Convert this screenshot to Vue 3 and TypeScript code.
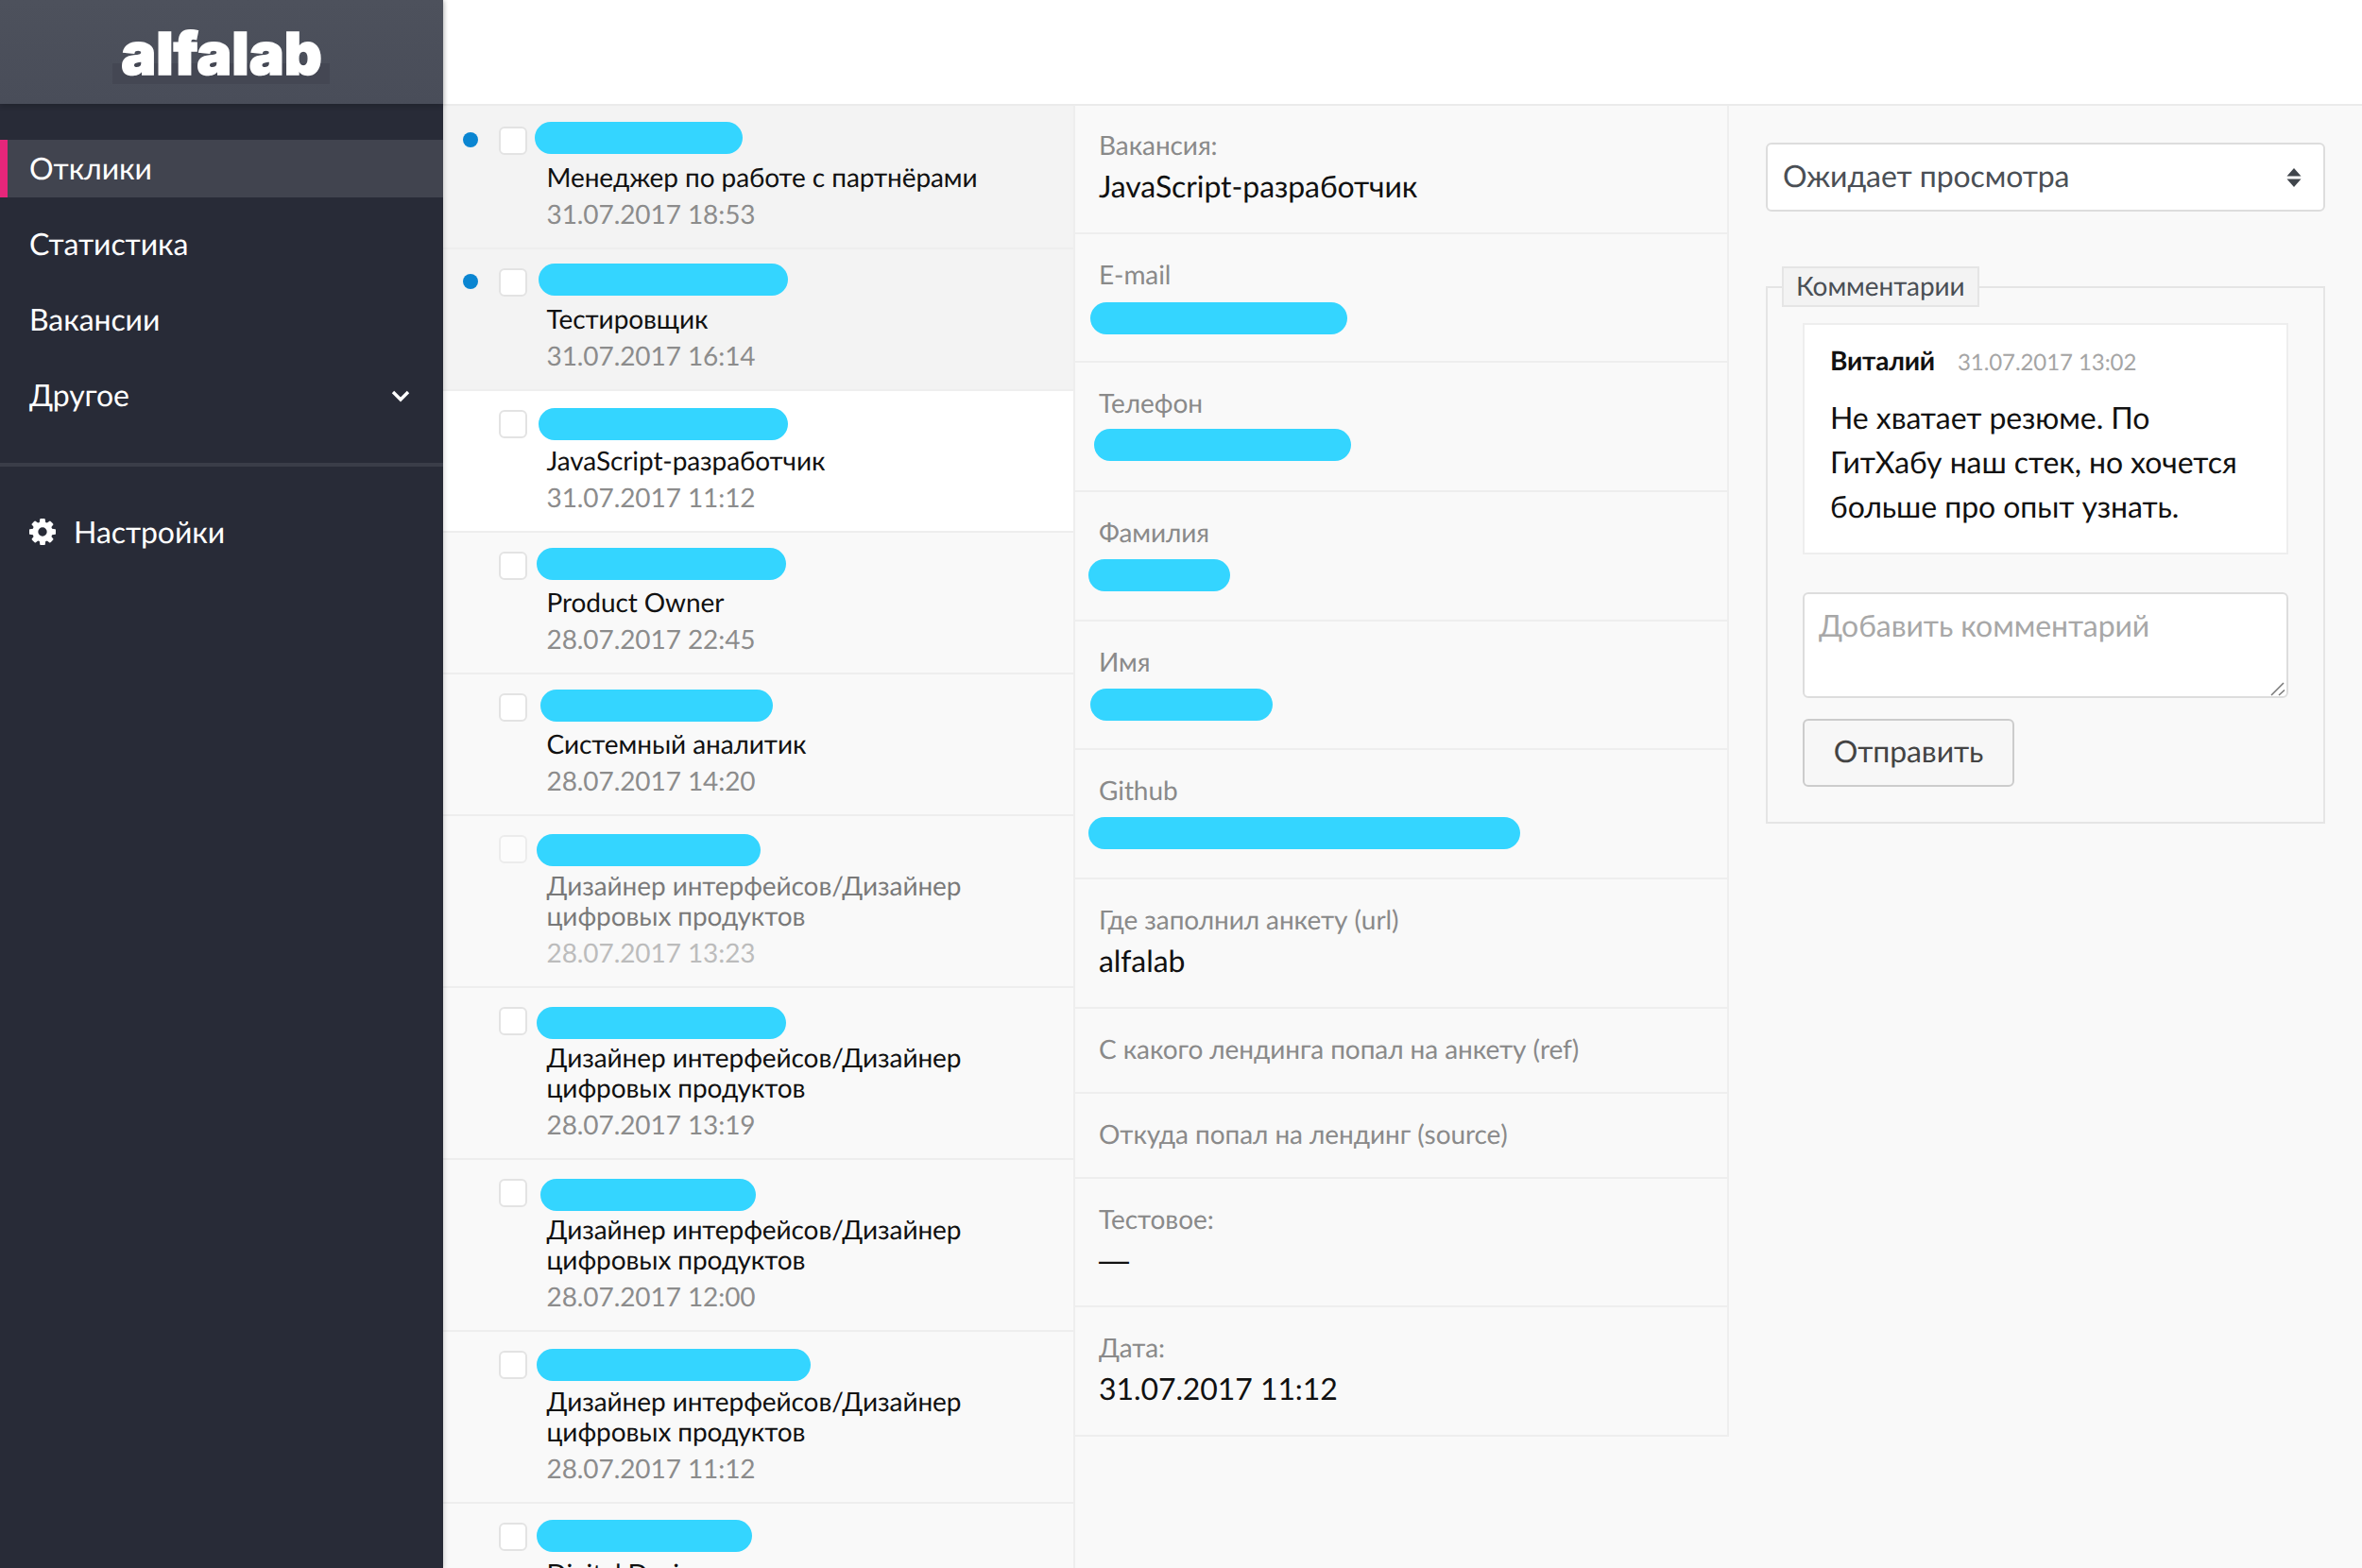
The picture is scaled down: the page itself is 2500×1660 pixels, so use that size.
<script setup lang="ts">
interface Response {
  name: string;
  date: string;
  pillX: number;
  pillW: number;
  pillTop: number;
  unread?: boolean;
  active?: boolean;
  faded?: boolean;
}

interface Field {
  label: string;
  value?: string;
  pillX?: number;
  pillW?: number;
  pillTop?: number;
}

const designer = "Дизайнер интерфейсов/Дизайнер цифровых продуктов";

const responses: Response[] = [
  { name: "Менеджер по работе с партнёрами", date: "31.07.2017 18:53", pillX: 0, pillW: 220, pillTop: 15, unread: true },
  { name: "Тестировщик", date: "31.07.2017 16:14", pillX: 4, pillW: 264, pillTop: 15, unread: true },
  { name: "JavaScript-разработчик", date: "31.07.2017 11:12", pillX: 4, pillW: 264, pillTop: 18, active: true },
  { name: "Product Owner", date: "28.07.2017 22:45", pillX: 2, pillW: 264, pillTop: 16 },
  { name: "Системный аналитик", date: "28.07.2017 14:20", pillX: 6, pillW: 246, pillTop: 16 },
  { name: designer, date: "28.07.2017 13:23", pillX: 2, pillW: 237, pillTop: 19, faded: true },
  { name: designer, date: "28.07.2017 13:19", pillX: 2, pillW: 264, pillTop: 20 },
  { name: designer, date: "28.07.2017 12:00", pillX: 6, pillW: 228, pillTop: 20 },
  { name: designer, date: "28.07.2017 11:12", pillX: 2, pillW: 290, pillTop: 18 },
  { name: "Digital Designer", date: "28.07.2017 10:40", pillX: 2, pillW: 228, pillTop: 17 },
];

const fields: Field[] = [
  { label: "Вакансия:", value: "JavaScript-разработчик" },
  { label: "E-mail", pillX: 16, pillW: 272, pillTop: 10 },
  { label: "Телефон", pillX: 20, pillW: 272, pillTop: 8 },
  { label: "Фамилия", pillX: 14, pillW: 150, pillTop: 9 },
  { label: "Имя", pillX: 16, pillW: 193, pillTop: 9 },
  { label: "Github", pillX: 14, pillW: 457, pillTop: 9 },
  { label: "Где заполнил анкету (url)", value: "alfalab" },
  { label: "С какого лендинга попал на анкету (ref)" },
  { label: "Откуда попал на лендинг (source)" },
  { label: "Тестовое:", value: "—" },
  { label: "Дата:", value: "31.07.2017 11:12" },
];

const navItems = ["Отклики", "Статистика", "Вакансии", "Другое"];
</script>

<template>
  <div class="app">
    <aside class="sidebar">
      <div class="logo"><span class="logo-text">alfalab</span></div>
      <nav class="nav">
        <a
          v-for="(item, i) in navItems"
          :key="item"
          class="nav-item"
          :class="{ current: i === 0 }"
        >
          {{ item }}
          <svg v-if="item === 'Другое'" class="chevron" viewBox="0 0 20 14" width="20" height="14">
            <path d="M2 3l8 8 8-8" fill="none" stroke="#fff" stroke-width="3.4" />
          </svg>
        </a>
      </nav>
      <div class="side-divider"></div>
      <a class="settings">
        <svg class="gear" viewBox="0 0 1536 1536" width="28" height="28">
          <path
            fill="#fff"
            d="M1024 768q0-106-75-181t-181-75-181 75-75 181 75 181 181 75 181-75 75-181zm512-109v222q0 12-8 23t-20 13l-185 28q-19 54-39 91 35 50 107 138 10 12 10 25t-9 23q-27 37-99 108t-94 71q-12 0-26-9l-138-108q-44 23-91 38-16 136-29 186-7 28-36 28h-222q-14 0-24.500-8.500t-11.500-21.500l-28-184q-49-16-90-37l-141 107q-10 9-25 9-14 0-25-11-126-114-165-168-7-10-7-23 0-12 8-23 15-21 51-66.500t54-70.500q-27-50-41-99l-183-27q-13-2-21-12.500t-8-23.500v-222q0-12 8-23t19-13l186-28q14-46 39-92-40-57-107-138-10-12-10-24 0-10 9-23 26-36 98.500-107.500t94.500-71.500q13 0 26 10l138 107q44-23 91-38 16-136 29-186 7-28 36-28h222q14 0 24.500 8.500t11.500 21.500l28 184q49 16 90 37l142-107q9-9 24-9 13 0 25 10 129 119 165 170 7 8 7 22 0 12-8 23-15 21-51 66.500t-54 70.500q26 50 41 98l183 28q13 2 21 12.500t8 23.500z"
          />
        </svg>
        Настройки
      </a>
    </aside>

    <div class="main">
      <header class="topbar"></header>
      <div class="columns">
        <section class="list">
          <article
            v-for="(r, i) in responses"
            :key="i"
            class="response"
            :class="{ unread: r.unread, active: r.active, faded: r.faded }"
          >
            <div class="dot-cell"><span v-if="r.unread" class="dot"></span></div>
            <span class="check"></span>
            <div class="response-body">
              <div class="pill-line">
                <span
                  class="pill"
                  :style="{ marginLeft: r.pillX + 'px', width: r.pillW + 'px', marginTop: r.pillTop + 'px' }"
                ></span>
              </div>
              <div class="response-name">{{ r.name }}</div>
              <div class="response-date">{{ r.date }}</div>
            </div>
          </article>
        </section>

        <section class="details">
          <div
            v-for="f in fields"
            :key="f.label"
            class="field"
            :class="{ short: !f.value && f.pillW === undefined }"
          >
            <div class="field-label">{{ f.label }}</div>
            <div v-if="f.value" class="field-value" :class="{ dash: f.value === '—' }">{{ f.value }}</div>
            <span
              v-if="f.pillW"
              class="pill"
              :style="{ marginLeft: (f.pillX ?? 0) - 25 + 'px', width: f.pillW + 'px', marginTop: f.pillTop + 'px' }"
            ></span>
          </div>
        </section>

        <section class="side">
          <div class="select">
            Ожидает просмотра
            <svg viewBox="0 0 16 20" width="16" height="20">
              <path d="M8 0l7.500 8.500h-15zM8 20l7.500-8.500h-15z" fill="#40454b" />
            </svg>
          </div>
          <fieldset class="comments">
            <legend>Комментарии</legend>
            <div class="comment">
              <div class="comment-head">
                <b>Виталий</b>
                <span>31.07.2017 13:02</span>
              </div>
              <p>Не хватает резюме. По ГитХабу наш стек, но хочется больше про опыт узнать.</p>
            </div>
            <div class="input-wrap">
              <textarea class="comment-input" placeholder="Добавить комментарий"></textarea>
              <svg class="grip" viewBox="0 0 16 16" width="16" height="16">
                <path d="M1 15L14 2M9 15l6-5.500" fill="none" stroke="#777" stroke-width="1.500" />
              </svg>
            </div>
            <button class="send" type="button">Отправить</button>
          </fieldset>
        </section>
      </div>
    </div>
  </div>
</template>

<style>
html,
body {
  margin: 0;
  background: #f9f9f9;
}
</style>

<style scoped>
* {
  box-sizing: border-box;
}

.app {
  display: flex;
  width: 2500px;
  height: 1660px;
  overflow: hidden;
  font-family: Lato, "Open Sans", sans-serif;
  letter-spacing: -0.08px;
  text-rendering: geometricPrecision;
  background: #f9f9f9;
}

.sidebar {
  flex: 0 0 469px;
  background: #282b37;
  color: #fff;
  box-shadow: 2px 0 4px rgba(0, 0, 0, 0.12);
  z-index: 2;
}

.logo {
  height: 110px;
  display: flex;
  justify-content: center;
  background: linear-gradient(#4d515c, #494d59);
  box-shadow: 0 2px 6px rgba(0, 0, 0, 0.2);
}

.logo-text {
  position: relative;
  margin-top: 19px;
  height: 76px;
  font-family: Inter, Lato, sans-serif;
  font-size: 62px;
  line-height: 76px;
  font-weight: 900;
  letter-spacing: 0;
  -webkit-text-stroke: 1.5px #fff;
  z-index: 0;
}

.logo-text::before {
  content: "";
  position: absolute;
  z-index: -1;
  left: -9px;
  right: -8px;
  top: 48px;
  height: 22px;
  background: #444753;
}

.nav {
  padding-top: 38px;
  display: flex;
  flex-direction: column;
  gap: 20px;
}

.nav-item {
  height: 60px;
  padding: 0 35px 2px 31px;
  display: flex;
  align-items: center;
  justify-content: space-between;
  font-size: 32px;
  border-left: 0 solid #e6267a;
}

.nav-item.current {
  height: 61px;
  margin-bottom: -1px;
  padding-left: 23px;
  border-left-width: 8px;
  background: #41444f;
}

.chevron {
  margin-top: 4px;
}

.side-divider {
  height: 4px;
  margin-top: 42px;
  background: #3a3d48;
}

.settings {
  margin-top: 40px;
  padding: 0 0 4px 31px;
  display: flex;
  align-items: center;
  gap: 19px;
  height: 60px;
  font-size: 32px;
}

.gear {
  margin-top: 2px;
}

.main {
  flex: 1;
  min-width: 0;
  display: flex;
  flex-direction: column;
}

.topbar {
  position: relative;
  z-index: 1;
  height: 110px;
  flex: none;
  background: #fff;
  box-shadow: 0 2px 0 #ebebeb;
}

.columns {
  flex: 1;
  display: flex;
  min-height: 0;
}

.list {
  flex: 0 0 669px;
  padding-top: 4px;
  background: linear-gradient(#f3f3f3 4px, #f9f9f9 4px);
  border-right: 2px solid #eee;
}

.response {
  display: flex;
  padding-bottom: 20px;
  border-bottom: 2px solid #eee;
  background: #f9f9f9;
}

.response.unread {
  background: #f3f3f3;
}

.response.active {
  background: #fff;
}

.dot-cell {
  flex: 0 0 59px;
  padding: 26px 0 0 21px;
}

.dot {
  display: block;
  width: 16px;
  height: 16px;
  border-radius: 50%;
  background: #0a85d1;
}

.check {
  flex: 0 0 30px;
  height: 30px;
  margin-top: 20px;
  background: #fff;
  border: 2px solid #e3e3e3;
  border-radius: 6px;
}

.response-body {
  flex: 1;
  margin-left: 8px;
  color: #111;
}

.pill-line {
  display: flow-root;
  height: 57px;
}

.pill {
  display: block;
  height: 34px;
  border-radius: 17px;
  background: #34d5ff;
}

.response-name,
.response-date {
  padding-left: 12.500px;
  padding-right: 60px;
  font-size: 28px;
  line-height: 32px;
}

.response-date {
  margin-top: 7px;
  color: #8c8c8c;
}

.response.faded .response-name,
.response.faded .response-date,
.response.faded .check {
  opacity: 0.55;
}

.details {
  flex: 0 0 692px;
  align-self: flex-start;
  padding-top: 1px;
  border-right: 2px solid #eee;
}

.field {
  display: flow-root;
  height: 136.67px;
  padding: 22px 24px 0 25px;
  border-bottom: 2px solid #eee;
}

.field.short {
  height: 90px;
}

.field-label {
  font-size: 28px;
  line-height: 40px;
  color: #8a8a8a;
}

.field-value {
  margin-top: 2px;
  font-size: 32px;
  line-height: 44px;
  color: #111;
}

.field-value.dash {
  font-family: "Liberation Sans", sans-serif;
}

.side {
  flex: 1;
  padding: 41px 39px 0 39px;
}

.select {
  height: 73px;
  padding: 0 23px 5px 16px;
  display: flex;
  align-items: center;
  justify-content: space-between;
  background: #fff;
  border: 2px solid #ddd;
  border-radius: 6px;
  font-size: 32px;
  color: #4a4f55;
}

.select svg {
  margin-top: 5px;
}

.comments {
  margin: 58px 0 0;
  padding: 17px 37px 37px;
  min-width: 0;
  border: 2px solid #e5e5e5;
}

.comments legend {
  margin-left: -22px;
  padding: 0 13px;
  height: 43px;
  line-height: 37px;
  font-size: 28px;
  color: #4a4f55;
  background: #f3f3f3;
  border: 2px solid #e5e5e5;
}

.comment {
  height: 245px;
  padding: 20px 27px 0;
  background: #fff;
  border: 2px solid #eee;
}

.comment-head {
  display: flex;
  align-items: baseline;
  gap: 24px;
  line-height: 34px;
}

.comment-head b {
  font-size: 28px;
  letter-spacing: -0.2px;
  color: #111;
}

.comment-head span {
  font-size: 24px;
  color: #a5a5a5;
}

.comment p {
  margin: 17px 0 0;
  font-size: 32px;
  line-height: 47px;
  color: #111;
}

.input-wrap {
  position: relative;
  margin-top: 40px;
}

.comment-input {
  display: block;
  width: 100%;
  height: 112px;
  padding: 11px 15px;
  font: 32px/44px Lato, "Open Sans", sans-serif;
  letter-spacing: -0.08px;
  text-rendering: geometricPrecision;
  background: #fff;
  border: 2px solid #ddd;
  border-radius: 6px;
  outline: none;
  resize: none;
}

.comment-input::placeholder {
  color: #a8a8a8;
}

.grip {
  position: absolute;
  right: 3px;
  bottom: 2px;
  pointer-events: none;
}

.send {
  display: block;
  width: 224px;
  height: 72px;
  margin-top: 22px;
  padding: 0 0 5px;
  font: 32px Lato, "Open Sans", sans-serif;
  letter-spacing: -0.08px;
  text-rendering: geometricPrecision;
  color: #444;
  background: #f7f7f7;
  border: 2px solid #ccc;
  border-radius: 6px;
}
</style>
